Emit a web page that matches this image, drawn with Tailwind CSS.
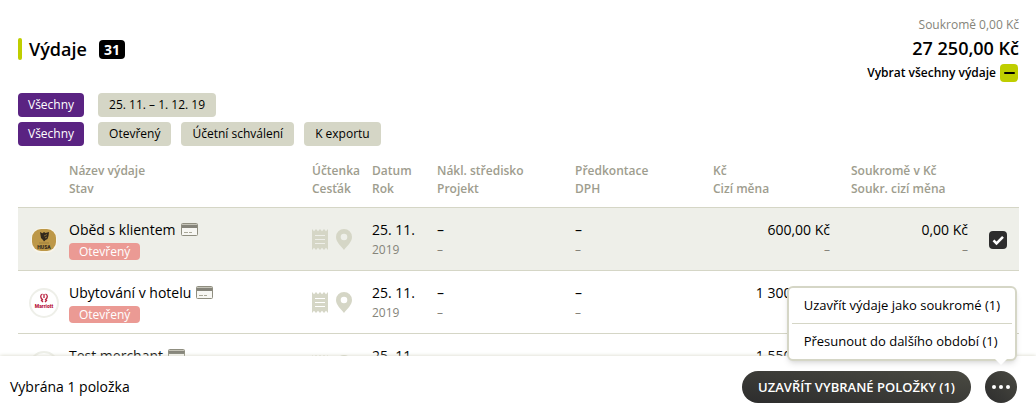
<!DOCTYPE html>
<html lang="cs">
<head>
    <meta charset="utf-8" />
    <meta name="viewport" content="width=device-width, initial-scale=1.0">
    <title>Výdaje</title>
    <script src="https://cdn.jsdelivr.net/npm/@tailwindcss/browser@4"></script>
</head>
<body class="flex h-screen flex-col overflow-hidden bg-white font-['Open_Sans',sans-serif] text-sm text-black">
    <!-- Shared icons -->
    <svg class="hidden">
        <symbol id="card" viewBox="0 0 17 13">
            <rect x=".5" y=".5" width="16" height="12" rx="1" fill="#f7f7f3" stroke="#8f8e80" />
            <path d="M1 2h15v3H1z" fill="#85847a" />
            <path d="M1 1.500h15" stroke="#c5c4b8" />
            <path d="M3 9.500h4M8 9.500h3" stroke="#a9a899" />
        </symbol>
        <symbol id="receipt" viewBox="0 0 16 21">
            <path fill-rule="evenodd" d="M0 0l2 2.200L4 0l2 2.200L8 0l2 2.200L12 0l2 2.200L16 0v21l-2-2.200L12 21l-2-2.200L8 21l-2-2.200L4 21l-2-2.200L0 21zM3 6v1h10V6zM3 10v1h10v-1zM3 14v1h10v-1z" fill="#d5d6c6" />
        </symbol>
        <symbol id="pin" viewBox="0 0 16 21">
            <path fill-rule="evenodd" d="M8 0a8 8 0 0 0-8 8c0 5 4.500 8.500 8 13 3.500-4.500 8-8 8-13a8 8 0 0 0-8-8zm0 4.700a3.300 3.300 0 1 1 0 6.600 3.300 3.300 0 0 1 0-6.600z" fill="#d5d6c6" />
        </symbol>
    </svg>

    <main class="min-h-0 flex-1 overflow-hidden pt-4 pr-[17px] pl-[18px]">
        <!-- Header -->
        <header class="flex items-start justify-between">
            <div class="flex items-center pt-[21px]">
                <span class="h-[22px] w-1 rounded-sm bg-[#bfce00]"></span>
                <h1 class="ml-[7px] text-lg leading-6 font-semibold">Výdaje</h1>
                <span class="ml-3 rounded bg-black px-[5px] text-sm leading-[19px] font-bold text-white">31</span>
            </div>
            <div class="flex flex-col items-end">
                <p class="text-xs leading-[18px] text-[#85847a]">Soukromě 0,00 Kč</p>
                <p class="text-lg leading-7 font-semibold">27 250,00 Kč</p>
                <div class="mt-[2px] flex items-center pr-px">
                    <label for="all" class="mr-1 text-xs font-semibold">Vybrat všechny výdaje</label>
                    <span class="grid">
                        <input id="all" type="checkbox" checked class="col-start-1 row-start-1 size-[18px] appearance-none rounded bg-[#bfce00]">
                        <svg class="pointer-events-none col-start-1 row-start-1 size-[18px]" viewBox="0 0 18 18"><path d="M5 9h9" stroke="#000" stroke-width="2" stroke-linecap="round" /></svg>
                    </span>
                </div>
            </div>
        </header>

        <!-- Filters -->
        <div class="mt-[11px] flex flex-col gap-[5px] text-xs leading-6">
            <div class="flex gap-[10px]">
                <button class="mr-1 rounded bg-[#5a2382] px-[10px] font-medium text-white">Všechny</button>
                <button class="rounded bg-[#d5d6c6] px-[11px]">25. 11. – 1. 12. 19</button>
            </div>
            <div class="flex gap-[10px]">
                <button class="mr-1 rounded bg-[#5a2382] px-[10px] font-medium text-white">Všechny</button>
                <button class="rounded bg-[#d5d6c6] px-[11px]">Otevřený</button>
                <button class="rounded bg-[#d5d6c6] px-[11px]">Účetní schválení</button>
                <button class="rounded bg-[#d5d6c6] px-[11px]">K exportu</button>
            </div>
        </div>

        <!-- Expenses -->
        <table class="mt-4 w-full table-fixed border-collapse">
            <colgroup>
                <col class="w-[51px]">
                <col>
                <col class="w-[60px]">
                <col class="w-[65px]">
                <col class="w-[138px]">
                <col class="w-[138px]">
                <col class="w-[138px]">
                <col class="w-[138px]">
                <col class="w-[30px]">
            </colgroup>
            <thead class="text-left text-xs leading-[18px] text-[#9e9d8e]">
                <tr class="h-[45px] border-b border-[#d5d6c6] align-top">
                    <td></td>
                    <th class="font-semibold">Název výdaje<br>Stav</th>
                    <th class="font-semibold">Účtenka<br>Cesťák</th>
                    <th class="font-semibold">Datum<br>Rok</th>
                    <th class="font-semibold">Nákl. středisko<br>Projekt</th>
                    <th class="font-semibold">Předkontace<br>DPH</th>
                    <th class="font-semibold">Kč<br>Cizí měna</th>
                    <th class="font-semibold">Soukromě v Kč<br>Soukr. cizí měna</th>
                    <td></td>
                </tr>
            </thead>
            <tbody class="leading-5 [&_td]:pt-[2px]">
                <tr class="h-[63px] border-b border-[#d5d6c6] bg-[#eeefe9]">
                    <td class="pl-[11px]">
                        <svg class="size-[30px]" viewBox="0 0 30 30">
                            <rect x="2" y="3" width="26" height="25" rx="10" fill="#f8f5ea" />
                            <rect x="3" y="4" width="24" height="22" rx="9" fill="#bd9848" />
                            <path d="M11 7l2.500 1.200L15 7l1.500 1L20 7l-.5 4-1 3-2 1-1.500 1.500-1-1.500-2-2z" fill="#32281c" />
                            <path d="M15 11l3-1.500M16 13l2-1" stroke="#bd9848" stroke-width=".6" />
                            <path d="M10 18h10" stroke="#8f7236" stroke-width=".7" />
                            <text x="15" y="24" text-anchor="middle" font-family="Roboto" font-size="5" font-weight="900" fill="#32281c">HUSA</text>
                        </svg>
                    </td>
                    <td>
                        <div class="flex items-center">Oběd s klientem<svg class="ml-[5px] h-[13px] w-[17px]"><use href="#card" /></svg></div>
                        <span class="mt-[3px] block w-fit rounded bg-[#eb9a94] px-[10px] text-xs leading-[17px] text-white">Otevřený</span>
                    </td>
                    <td><div class="flex gap-2"><svg class="h-[21px] w-4"><use href="#receipt" /></svg><svg class="h-[21px] w-4"><use href="#pin" /></svg></div></td>
                    <td>25. 11.<div class="text-xs leading-5 text-[#85847a]">2019</div></td>
                    <td>–<div class="text-xs leading-5 text-[#85847a]">–</div></td>
                    <td>–<div class="text-xs leading-5 text-[#85847a]">–</div></td>
                    <td class="pr-[21px] text-right">600,00 Kč<div class="text-xs leading-5 text-[#85847a]">–</div></td>
                    <td class="pr-[21px] text-right">0,00 Kč<div class="text-xs leading-5 text-[#85847a]">–</div></td>
                    <td>
                        <span class="grid">
                            <input type="checkbox" checked aria-label="Oběd s klientem" class="col-start-1 row-start-1 size-[18px] appearance-none rounded bg-[#2d2d2d]">
                            <svg class="pointer-events-none col-start-1 row-start-1 size-[18px]" viewBox="0 0 18 18"><path d="M4.500 9.300l3 3L14 5.800" fill="none" stroke="#fff" stroke-width="2.600" /></svg>
                        </span>
                    </td>
                </tr>
                <tr class="h-[63px] border-b border-[#d5d6c6]">
                    <td class="pl-[11px]">
                        <svg class="size-[30px]" viewBox="0 0 30 30">
                            <circle cx="15" cy="15" r="14" fill="#fff" stroke="#eeefe9" stroke-width="2" />
                            <path d="M13.500 6c-2.500 1-2.500 4 .5 6M16.500 6c2.500 1 2.500 4-.5 6M15 6v4M12 12l2 2M18 12l-2 2" fill="none" stroke="#b9213f" stroke-width="1.300" />
                            <text x="15" y="19.500" text-anchor="middle" font-family="Roboto" font-size="5" font-weight="900" fill="#b9213f">Marriott</text>
                        </svg>
                    </td>
                    <td>
                        <div class="flex items-center">Ubytování v hotelu<svg class="ml-[5px] h-[13px] w-[17px]"><use href="#card" /></svg></div>
                        <span class="mt-[3px] block w-fit rounded bg-[#eb9a94] px-[10px] text-xs leading-[17px] text-white">Otevřený</span>
                    </td>
                    <td><div class="flex gap-2"><svg class="h-[21px] w-4"><use href="#receipt" /></svg><svg class="h-[21px] w-4"><use href="#pin" /></svg></div></td>
                    <td>25. 11.<div class="text-xs leading-5 text-[#85847a]">2019</div></td>
                    <td>–<div class="text-xs leading-5 text-[#85847a]">–</div></td>
                    <td>–<div class="text-xs leading-5 text-[#85847a]">–</div></td>
                    <td class="pr-[21px] text-right align-top"><div class="pt-[10px]">1 300,00 Kč</div></td>
                    <td></td>
                    <td></td>
                </tr>
                <tr class="h-[63px] border-b border-[#d5d6c6]">
                    <td class="pl-[11px]">
                        <svg class="size-[30px]" viewBox="0 0 30 30"><circle cx="15" cy="15" r="14" fill="#fff" stroke="#eeefe9" stroke-width="2" /></svg>
                    </td>
                    <td class="align-top">
                        <div class="flex items-center pt-[10px]">Test merchant<svg class="ml-[5px] h-[13px] w-[17px]"><use href="#card" /></svg></div>
                    </td>
                    <td><div class="flex gap-2"><svg class="h-[21px] w-4"><use href="#receipt" /></svg><svg class="h-[21px] w-4"><use href="#pin" /></svg></div></td>
                    <td class="align-top"><div class="pt-[10px]">25. 11.</div></td>
                    <td></td>
                    <td></td>
                    <td class="pr-[21px] text-right align-top"><div class="pt-[10px]">1 550,00 Kč</div></td>
                    <td></td>
                    <td></td>
                </tr>
            </tbody>
        </table>
    </main>

    <!-- Bulk actions -->
    <footer class="relative flex items-center justify-between bg-white pt-[15px] pr-[19px] pb-[11px] pl-[10px] shadow-[0_0_4px_#d5d6c6]">
        <p>Vybrána 1 položka</p>
        <div class="flex items-center gap-[14px]">
            <button class="h-8 rounded-full bg-linear-to-tr from-[#2d2d2d] to-[#4a4a42] px-4 text-[13px] font-semibold text-white">UZAVŘÍT VYBRANÉ POLOŽKY (1)</button>
            <div class="relative">
                <button aria-label="Další akce" class="flex size-8 items-center justify-center rounded-full bg-linear-to-tr from-[#2d2d2d] to-[#4a4a42]">
                    <svg class="h-1 w-5" viewBox="0 0 20 4" fill="#fff"><circle cx="3" cy="2" r="2" /><circle cx="10" cy="2" r="2" /><circle cx="17" cy="2" r="2" /></svg>
                </button>
                <div class="absolute right-0 bottom-full mb-[10px] rounded-md border-2 border-[#d5d6c6] bg-white px-[3px] text-[13px] whitespace-nowrap shadow-md">
                    <button class="block w-full border-b border-[#d5d6c6] px-3 text-left leading-[35px]">Uzavřít výdaje jako soukromé (1)</button>
                    <button class="block w-full px-3 text-left leading-[35px]">Přesunout do dalšího období (1)</button>
                    <svg class="absolute top-full right-2 h-[6px] w-3" viewBox="0 0 12 6"><path d="M0 0h12L6 6z" fill="#fff" /></svg>
                </div>
            </div>
        </div>
    </footer>
</body>
</html>
